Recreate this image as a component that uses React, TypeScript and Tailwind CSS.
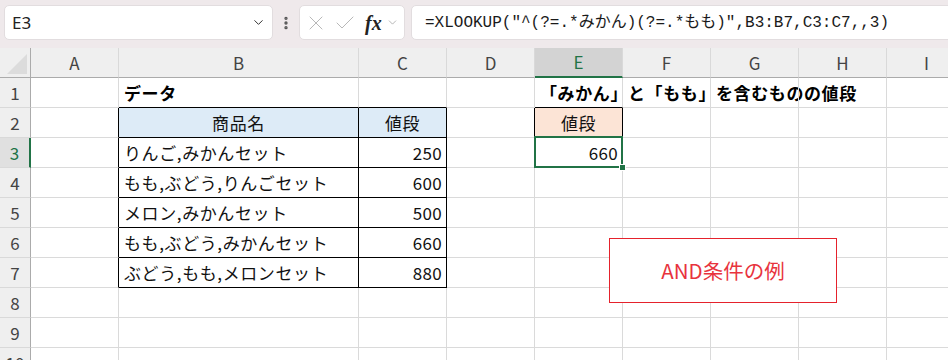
import { ChevronDown, X, Check, EllipsisVertical } from "lucide-react";

type Col = { key: string; w: string };

const cols: Col[] = [
  { key: "A", w: "w-[88px]" },
  { key: "B", w: "w-[240px]" },
  { key: "C", w: "w-[88px]" },
  { key: "D", w: "w-[88px]" },
  { key: "E", w: "w-[88px]" },
  { key: "F", w: "w-[88px]" },
  { key: "G", w: "w-[88px]" },
  { key: "H", w: "w-[88px]" },
  { key: "I", w: "w-[80px]" },
];

type Cell = { text: string; align?: "left" | "right" | "center"; bold?: boolean; fill?: string; wide?: boolean };

const data: Record<string, Cell> = {
  B1: { text: "データ", bold: true, wide: true },
  B2: { text: "商品名", align: "center", fill: "bg-[#ddebf7]", wide: true },
  C2: { text: "値段", align: "center", fill: "bg-[#ddebf7]", wide: true },
  B3: { text: "りんご,みかんセット", wide: true },
  C3: { text: "250", align: "right" },
  B4: { text: "もも,ぶどう,りんごセット", wide: true },
  C4: { text: "600", align: "right" },
  B5: { text: "メロン,みかんセット", wide: true },
  C5: { text: "500", align: "right" },
  B6: { text: "もも,ぶどう,みかんセット", wide: true },
  C6: { text: "660", align: "right" },
  B7: { text: "ぶどう,もも,メロンセット", wide: true },
  C7: { text: "880", align: "right" },
  E1: { text: "「みかん」と「もも」を含むものの値段", bold: true, wide: true },
  E2: { text: "値段", align: "center", fill: "bg-[#fce4d6]", wide: true },
  E3: { text: "660", align: "right" },
};

const rows = [1, 2, 3, 4, 5, 6, 7, 8, 9, 10];

function inTable(c: string, r: number) {
  if ((c === "B" || c === "C") && r >= 2 && r <= 7) return true;
  if (c === "E" && (r === 2 || r === 3)) return true;
  return false;
}

function Toolbar() {
  return (
    <div className="h-[48px] bg-[#efe9eb] flex items-start pt-[5px] pl-[4px] overflow-hidden">
      <div className="w-[269px] h-[35px] shrink-0 bg-white rounded-[5px] border border-[#e2dddf] flex items-center justify-between pl-[7px] pr-[6px]">
        <span className="text-[17px] text-[#222] font-['Noto_Sans',sans-serif]">E3</span>
        <ChevronDown size={15} strokeWidth={1.6} className="text-[#333]" />
      </div>
      <div className="w-[26px] h-[35px] shrink-0 flex items-center justify-center">
        <EllipsisVertical size={16} strokeWidth={3} className="text-[#555]" />
      </div>
      <div className="w-[106px] h-[35px] shrink-0 bg-white rounded-[5px] border border-[#e2dddf] flex items-center pl-[4px]">
        <X size={24} strokeWidth={1} className="text-[#b8b8b8]" />
        <Check size={24} strokeWidth={1} className="text-[#b8b8b8] ml-[5px]" />
        <span className="ml-[8px] text-[20px] italic font-bold text-[#222] font-['Liberation_Serif',serif] leading-none">
          fx
        </span>
        <ChevronDown size={13} strokeWidth={1.3} className="text-[#999] ml-[4px]" />
      </div>
      <div className="w-[560px] h-[35px] shrink-0 ml-[6px] bg-white rounded-[5px] border border-[#e2dddf] flex items-center pl-[13px]">
        <span className="text-[16px] text-[#1a1a1a] font-['Liberation_Mono','Noto_Sans_CJK_JP',monospace] whitespace-nowrap">
          =XLOOKUP("^(?=.*みかん)(?=.*もも)",B3:B7,C3:C7,,3)
        </span>
      </div>
    </div>
  );
}

function HeaderRow() {
  return (
    <div className="flex h-[30px]">
      <div className="w-[31px] shrink-0 h-full bg-[#efefef] border-r border-b border-r-[#ababab] border-b-[#ababab] flex items-end justify-end p-[3px]">
        <div className="w-0 h-0 border-l-[20px] border-l-transparent border-b-[20px] border-b-[#dcdcdc]" />
      </div>
      {cols.map((c) => {
        const sel = c.key === "E";
        return (
          <div
            key={c.key}
            className={
              c.w +
              " shrink-0 h-full flex items-center justify-center text-[17px] border-r border-r-[#d9d9d9] " +
              (sel
                ? "bg-[#d3d3d3] border-b-2 border-b-[#217346] text-[#217346]"
                : "bg-[#efefef] border-b border-b-[#ababab] text-[#444]")
            }
          >
            {c.key}
          </div>
        );
      })}
    </div>
  );
}

function GridRow({ r }: { r: number }) {
  const sel = r === 3;
  return (
    <div className="flex h-[30px]">
      <div
        className={
          "w-[31px] shrink-0 h-full flex items-center justify-center text-[17px] border-b border-b-[#d9d9d9] " +
          (sel
            ? "bg-[#e0e0e0] border-r-2 border-r-[#217346] text-[#217346]"
            : "bg-[#efefef] border-r border-r-[#ababab] text-[#444]")
        }
      >
        {r}
      </div>
      {cols.map((c, i) => {
        const id = c.key + r;
        const cell = data[id];
        const next = cols[i + 1]?.key ?? "";
        const rightDark = inTable(c.key, r) || inTable(next, r);
        const bottomDark = inTable(c.key, r) || inTable(c.key, r + 1);
        const align =
          cell?.align === "right"
            ? "justify-end pr-[4px]"
            : cell?.align === "center"
            ? "justify-center"
            : "justify-start pl-[5px]";
        return (
          <div
            key={id}
            className={
              c.w +
              " shrink-0 h-full relative flex items-center border-r border-b whitespace-nowrap text-[17px] text-black " +
              (rightDark ? "border-r-black " : "border-r-[#dadada] ") +
              (bottomDark ? "border-b-black " : "border-b-[#dadada] ") +
              (cell?.fill ?? "") +
              " " +
              align
            }
          >
            {cell && (
              <span
                className={
                  (cell.bold ? "font-bold" : "font-normal text-[#111]") +
                  (cell.wide ? " tracking-[0.6px]" : " tracking-[0.3px]")
                }
              >
                {cell.text}
              </span>
            )}
            {id === "E3" && (
              <div className="absolute z-10 -left-[1px] -top-[2px] w-[89px] h-[32px] border-2 border-[#217346]">
                <div className="absolute -right-[5px] -bottom-[5px] w-[7px] h-[7px] bg-[#217346] border border-white" />
              </div>
            )}
          </div>
        );
      })}
    </div>
  );
}

export default function App() {
  return (
    <div className="w-[948px] h-[360px] overflow-hidden bg-white relative font-['Noto_Sans_CJK_JP','Noto_Sans',sans-serif]">
      <Toolbar />
      <HeaderRow />
      {rows.map((r) => (
        <GridRow key={r} r={r} />
      ))}
      <div className="absolute z-20 left-[609px] top-[238px] w-[228px] h-[65px] bg-white border border-[#e5222c] flex items-center justify-center">
        <span className="text-[20.5px] text-[#e8333d] font-normal">AND条件の例</span>
      </div>
    </div>
  );
}
